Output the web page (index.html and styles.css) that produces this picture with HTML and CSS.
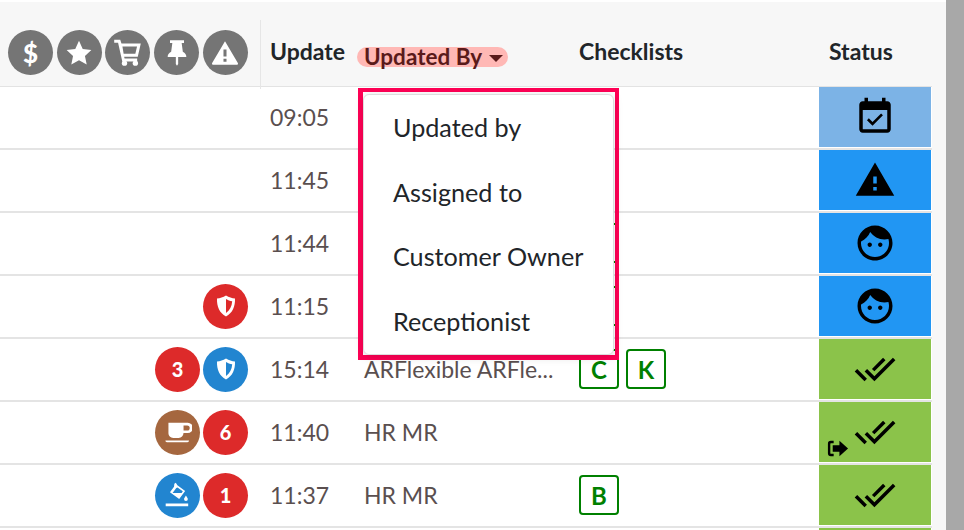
FILE: index.html
```html
<!DOCTYPE html>
<html lang="en">
<head>
    <meta charset="UTF-8">
    <title>Orders</title>
    <link rel="stylesheet" href="styles.css">
</head>
<body>

<div class="page">
    <div class="board">
        <div class="head-row">
            <div class="head-icons">
                <span class="circle grey money">$</span>
                <span class="circle grey">
                    <svg viewBox="0 0 24 24" width="28" height="28"><path d="M12 1.600l3.200 6.900 7.400.9-5.500 5.100 1.500 7.400-6.600-3.700-6.600 3.700 1.500-7.400L1.400 9.400l7.400-.9z"/></svg>
                </span>
                <span class="circle grey">
                    <svg viewBox="0 0 24 24" width="29" height="29"><path fill-rule="evenodd" d="M1 1.500h5l1 3h16l-2.500 11H9.200l.4 1.500H20v2.500H7.700L4.200 4H1zM7.800 7l1 6h9.700l1.400-6z"/><circle cx="9.500" cy="20.800" r="2.200"/><circle cx="18.500" cy="20.800" r="2.200"/></svg>
                </span>
                <span class="circle grey">
                    <svg viewBox="0 0 24 24" width="28" height="28"><path d="M6 1h12v2.500h-2l1 7.500c2 1 3 2.500 3 4.500H13v6l-1 1.500-1-1.500v-6H4c0-2 1-3.500 3-4.500l1-7.500H6z"/></svg>
                </span>
                <span class="circle grey">
                    <svg viewBox="0 0 24 24" width="28" height="28"><path fill-rule="evenodd" d="M12 2l11 18.500a1 1 0 0 1-1 1.500H2a1 1 0 0 1-1-1.500zM10.700 9v6h2.600V9zm0 8v2.500h2.600V17z"/></svg>
                </span>
            </div>
            <div class="head-cell time">Update</div>
            <div class="head-cell">
                <span class="sort-pill">Updated By <i class="caret"></i></span>
            </div>
            <div class="head-cell">Checklists</div>
            <div class="head-cell status-title">Status</div>
        </div>

        <div class="row">
            <div class="badges"></div>
            <div class="cell time">09:05</div>
            <div class="cell"></div>
            <div class="cell"></div>
            <div class="status planned"><svg viewBox="0 0 24 24"><use href="#ic-event"/></svg></div>
        </div>
        <div class="row">
            <div class="badges"></div>
            <div class="cell time">11:45</div>
            <div class="cell"></div>
            <div class="cell"></div>
            <div class="status open"><svg viewBox="0 0 24 24"><use href="#ic-warning"/></svg></div>
        </div>
        <div class="row">
            <div class="badges"></div>
            <div class="cell time">11:44</div>
            <div class="cell"></div>
            <div class="cell tags"><span class="tag"></span></div>
            <div class="status open"><svg viewBox="0 0 24 24"><use href="#ic-face"/></svg></div>
        </div>
        <div class="row">
            <div class="badges">
                <span class="circle red"><svg viewBox="0 0 24 24" width="24" height="24"><use href="#ic-shield"/></svg></span>
            </div>
            <div class="cell time">11:15</div>
            <div class="cell"></div>
            <div class="cell tags"><span class="tag"></span></div>
            <div class="status open"><svg viewBox="0 0 24 24"><use href="#ic-face"/></svg></div>
        </div>
        <div class="row">
            <div class="badges">
                <span class="circle red">3</span>
                <span class="circle blue"><svg viewBox="0 0 24 24" width="24" height="24"><use href="#ic-shield"/></svg></span>
            </div>
            <div class="cell time">15:14</div>
            <div class="cell">ARFlexible ARFle...</div>
            <div class="cell tags"><span class="tag">C</span><span class="tag">K</span></div>
            <div class="status done"><svg viewBox="0 0 24 24"><use href="#ic-done"/></svg></div>
        </div>
        <div class="row">
            <div class="badges">
                <span class="circle brown">
                    <svg viewBox="0 0 24 24" width="29" height="29"><path fill-rule="evenodd" d="M4.500 4h16a3.700 3.700 0 0 1 0 8.500H17c-.2 2.300-1.800 4-4 4H8.500c-2.300 0-4-1.800-4-4zM17 6.200v4.200h3a2.100 2.100 0 0 0 0-4.200zM2 18.700h19.500c0 .8-.5 1.300-1.300 1.300H3.300c-.8 0-1.300-.5-1.300-1.300z"/></svg>
                </span>
                <span class="circle red">6</span>
            </div>
            <div class="cell time">11:40</div>
            <div class="cell">HR MR</div>
            <div class="cell"></div>
            <div class="status done">
                <svg viewBox="0 0 24 24"><use href="#ic-done"/></svg>
                <svg class="left-mark" viewBox="0 0 24 24"><path fill-rule="evenodd" d="M8 4H5a3 3 0 0 0-3 3v10a3 3 0 0 0 3 3h3v-2.500H5a.5.5 0 0 1-.5-.5V7a.5.5 0 0 1 .5-.5h3zM14 4l9 8-9 8v-4.500H7v-7h7z"/></svg>
            </div>
        </div>
        <div class="row">
            <div class="badges">
                <span class="circle blue">
                    <svg viewBox="0 0 24 24" width="27" height="27"><path fill-rule="evenodd" d="M9.200 1.500l1.300-.8 1.400 2.100 6.900 5.100-5.300 7.300-8.200-6 3.600-5zm1.700 3.800l-3.300 4.400h8.100l1-1.400-4.700-3.400zM19.500 12c1 1.500 1.700 2.500 1.700 3.200a1.700 1.700 0 0 1-3.400 0c0-.7.700-1.700 1.700-3.200zM1.500 19h20v2.500h-20z"/></svg>
                </span>
                <span class="circle red">1</span>
            </div>
            <div class="cell time">11:37</div>
            <div class="cell">HR MR</div>
            <div class="cell tags"><span class="tag">B</span></div>
            <div class="status done"><svg viewBox="0 0 24 24"><use href="#ic-done"/></svg></div>
        </div>
        <div class="row">
            <div class="badges"></div>
            <div class="cell time"></div>
            <div class="cell"></div>
            <div class="cell"></div>
            <div class="status done"></div>
        </div>

        <!-- menu of the Updated By column -->
        <div class="menu-frame">
            <ul class="menu">
                <li>Updated by</li>
                <li>Assigned to</li>
                <li>Customer Owner</li>
                <li>Receptionist</li>
            </ul>
        </div>
    </div>
    <div class="scrollbar"></div>
</div>

<svg class="sprites" width="0" height="0">
    <symbol id="ic-event" viewBox="0 0 24 24"><path d="M16.530 11.060L15.470 10l-4.880 4.880-2.120-2.120-1.060 1.060L10.590 17l5.940-5.940zM19 3h-1V1h-2v2H8V1H6v2H5c-1.110 0-1.990.9-1.990 2L3 19c0 1.100.89 2 2 2h14c1.100 0 2-.9 2-2V5c0-1.100-.9-2-2-2zm0 16H5V8h14v11z"/></symbol>
    <symbol id="ic-warning" viewBox="0 0 24 24"><path d="M1 21h22L12 2 1 21zm12-3h-2v-2h2v2zm0-4h-2v-4h2v4z"/></symbol>
    <symbol id="ic-face" viewBox="0 0 24 24"><path d="M9 11.750c-.69 0-1.250.56-1.250 1.250s.56 1.250 1.250 1.250 1.250-.56 1.250-1.250-.56-1.250-1.250-1.250zm6 0c-.69 0-1.250.56-1.250 1.250s.56 1.250 1.250 1.250 1.250-.56 1.250-1.250-.56-1.250-1.250-1.250zM12 2C6.480 2 2 6.480 2 12s4.480 10 10 10 10-4.480 10-10S17.520 2 12 2zm0 18c-4.410 0-8-3.590-8-8 0-.29.02-.58.05-.86 2.360-1.050 4.230-2.980 5.210-5.370C11.070 8.330 14.050 10 17.420 10c.78 0 1.530-.09 2.250-.26.21.71.33 1.470.33 2.260 0 4.410-3.590 8-8 8z"/></symbol>
    <symbol id="ic-done" viewBox="0 0 24 24"><path d="M18 7l-1.410-1.410-6.340 6.340 1.410 1.410L18 7zm4.240-1.410L11.660 16.170 7.480 12l-1.410 1.410L11.660 19l12-12-1.420-1.410zM.41 13.410L6 19l1.410-1.410L1.830 12 .41 13.410z"/></symbol>
    <symbol id="ic-shield" viewBox="0 0 24 24"><path fill-rule="evenodd" d="M12 1.500c3 1.800 6 2.800 9 3 .3 8-2.500 14.500-9 18-6.500-3.500-9.300-10-9-18 3-.2 6-1.200 9-3zM12 5v14c3.800-2.500 5.800-6.500 6.200-11.700-2.200-.3-4.300-1.100-6.200-2.300z"/></symbol>
</svg>

</body>
</html>
```

FILE: styles.css
```css
html, body {
    margin: 0;
    padding: 0;
    height: 530px;
    overflow: hidden;
    font-family: Lato, "Open Sans", sans-serif;
    background-color: #fff;
}

.sprites {
    display: none;
}

.page {
    display: flex;
    height: 528px;
    padding-top: 2px;
}

.board {
    position: relative;
    flex: 1;
    overflow: hidden;
    background-color: #f7f7f7;
}

.scrollbar {
    width: 18px;
    margin-top: -2px;
    background-color: #a8a8a8;
}

.head-row, .row {
    display: grid;
    grid-template-columns: 261px 103px 215px 240px 112px;
    width: 932px;
}

.head-row {
    position: relative;
    z-index: 1;
    height: 84px;
    border-bottom: 1px solid #e3e3e3;
}

.head-icons {
    display: flex;
    gap: 3.7px;
    box-sizing: border-box;
    height: 69px;
    margin-top: 18px;
    padding: 10px 0 0 8px;
    border-right: 1px solid #e6e6e6;
}

.head-cell {
    padding-top: 35px;
    font-size: 23px;
    line-height: 28px;
    font-weight: 700;
    color: #212529;
}

.status-title {
    padding-left: 10px;
}

.time {
    padding-left: 9px;
}

.sort-pill {
    display: inline-block;
    position: relative;
    top: 5px;
    box-sizing: border-box;
    width: 151px;
    height: 20px;
    margin-left: -7px;
    padding-left: 7px;
    line-height: 19px;
    font-size: 22.5px;
    border-radius: 10px;
    background-color: #ffb8b5;
    color: #5a1a1a;
}

.caret {
    display: inline-block;
    width: 0;
    height: 0;
    margin-left: 2px;
    vertical-align: 3px;
    border-left: 7px solid transparent;
    border-right: 7px solid transparent;
    border-top: 7px solid #5a1a1a;
}

.circle {
    display: flex;
    flex: none;
    justify-content: center;
    align-items: center;
    width: 45px;
    height: 45px;
    border-radius: 50%;
    color: #fff;
    font-size: 20px;
    font-weight: 900;
}

.circle svg {
    fill: #fff;
}

.circle.grey { background-color: #757575; }
.circle.red { background-color: #dd2a2a; }
.circle.blue { background-color: #2285d0; }
.circle.brown { background-color: #a5673f; }

.circle.money {
    font-size: 26px;
    font-weight: 900;
}

.row {
    height: 60px;
    padding-bottom: 1px;
    border-bottom: 2px solid #e4e4e4;
    background-color: #fff;
    color: #5a4f4f;
    font-size: 23px;
}

.badges {
    display: flex;
    justify-content: flex-end;
    align-items: center;
    gap: 3px;
    padding-right: 13px;
}

.cell {
    display: flex;
    align-items: center;
    min-width: 0;
}

.tags {
    gap: 7px;
}

.tag {
    display: flex;
    justify-content: center;
    align-items: center;
    box-sizing: border-box;
    width: 40px;
    height: 40px;
    border: 2px solid #008000;
    border-radius: 4px;
    color: #008000;
    font-size: 24px;
    font-weight: 700;
}

.status {
    position: relative;
    display: flex;
    justify-content: center;
    align-items: center;
}

.status svg {
    width: 42px;
    height: 42px;
}

.status.planned { background-color: #7cb3e6; }
.status.open { background-color: #2196f3; }
.status.done { background-color: #8bc34a; }

.status .left-mark {
    position: absolute;
    left: 7px;
    bottom: 2px;
    width: 23px;
    height: 23px;
}

.menu-frame {
    position: absolute;
    z-index: 2;
    top: 86px;
    left: 358px;
    width: 261px;
    box-sizing: border-box;
    padding: 2px 1px 0 0;
    border-style: solid;
    border-color: #ff0055;
    border-width: 4px 4px 5px 5px;
}

.menu {
    list-style: none;
    margin: 0;
    padding: 0 0 1px;
    border: 1px solid #ddd;
    border-radius: 6px;
    background-color: #fff;
    box-shadow: 0 2px 10px rgba(0, 0, 0, 0.15);
}

.menu li {
    height: 64.5px;
    line-height: 64.5px;
    padding-left: 29px;
    font-size: 25.2px;
    color: #212529;
}
```
